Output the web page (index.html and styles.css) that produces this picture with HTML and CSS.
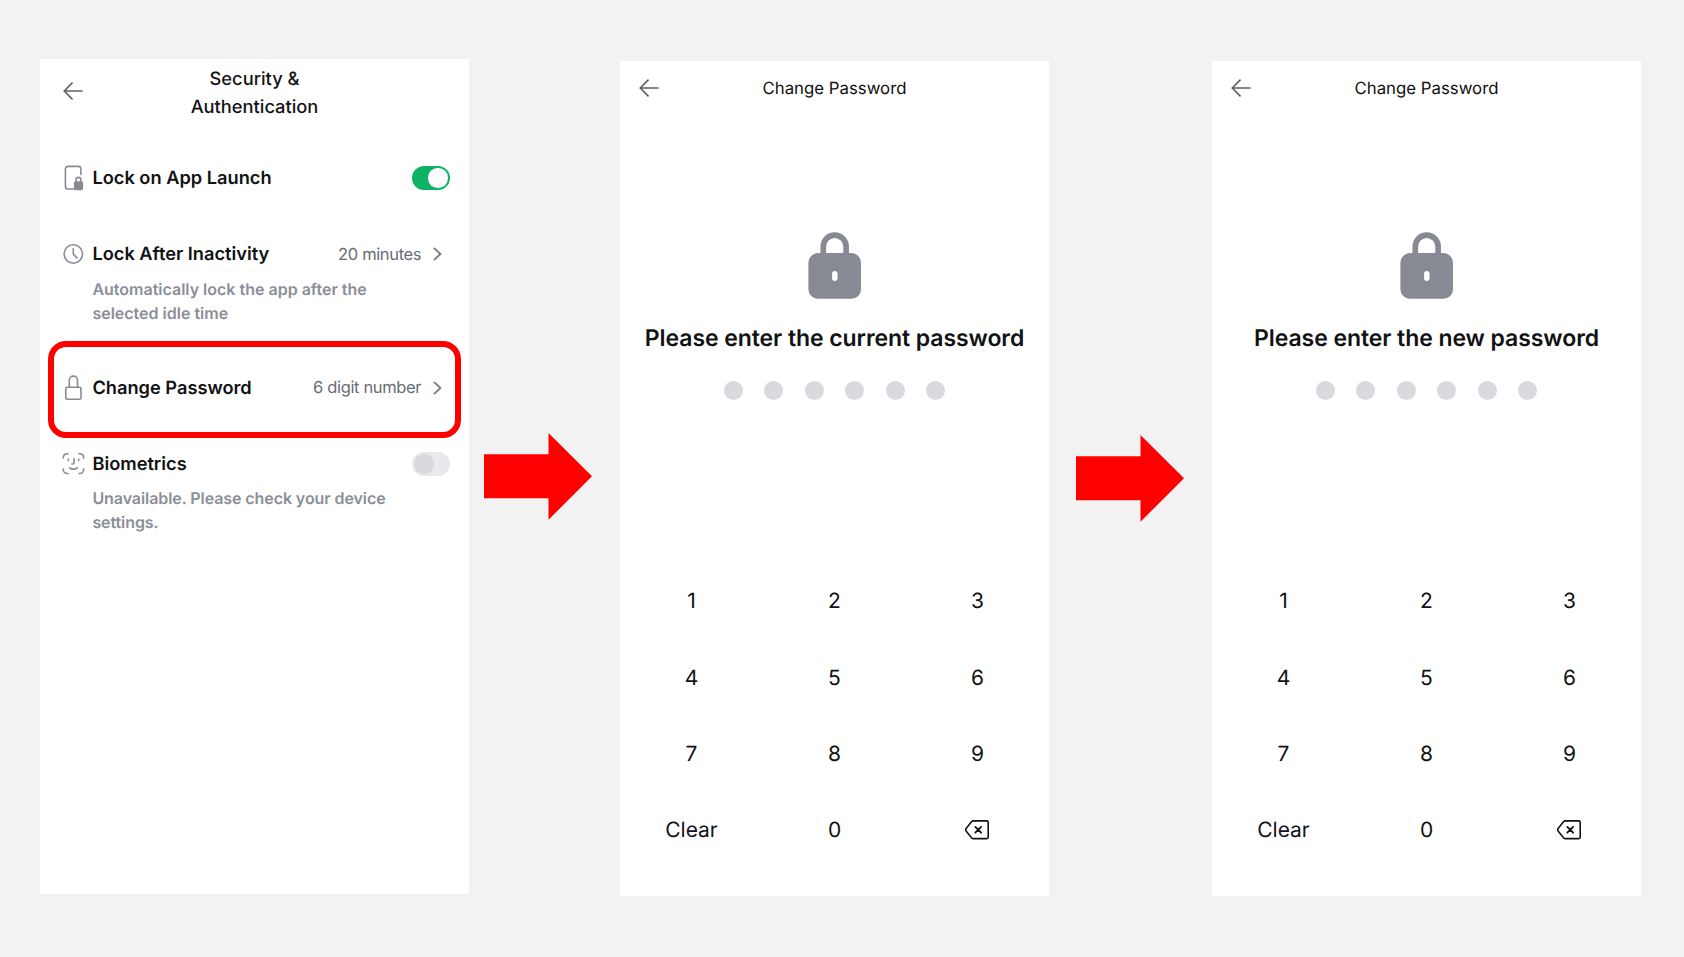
FILE: index.html
```html
<!DOCTYPE html>
<html lang="en">
<head>
<meta charset="utf-8">
<title>Change Password</title>
<link rel="stylesheet" href="styles.css">
</head>
<body>
<svg class="defs" aria-hidden="true">
  <symbol id="back" viewBox="0 0 20 18"><path d="M19 9H1.2M9 1.2 1.2 9 9 16.8"/></symbol>
  <symbol id="chevron" viewBox="0 0 9 14"><path d="M1.4 1.4 7.4 7l-6 5.600"/></symbol>
  <symbol id="arrow" viewBox="0 0 108 87"><path d="M0 21.300H64.500V0L108 43.300 64.500 86.700V65.200H0Z"/></symbol>
  <symbol id="padlock" viewBox="0 0 54 68"><path d="M15.300 23V14.500a11.200 11.200 0 0 1 22.800 0V23" fill="none" stroke="currentColor" stroke-width="5.700"/><rect x=".4" y="21.100" width="52.600" height="45.600" rx="9.500"/><rect x="24.100" y="39" width="5.400" height="10" rx="2.700" fill="#fff"/></symbol>
  <symbol id="erase" viewBox="0 0 26 22"><path d="M9.200 1.900H22.900a1.300 1.300 0 0 1 1.300 1.300V18.300a1.300 1.300 0 0 1-1.300 1.300H9.200a2 2 0 0 1-1.500-.7L2.300 12.200a2.200 2.200 0 0 1 0-2.900L7.700 2.600a2 2 0 0 1 1.500-.7Z" stroke-width="1.600"/><path d="m11.300 7.900 5.800 5.800m0-5.800-5.800 5.800" stroke-width="1.800"/></symbol>
</svg>
<main class="board">
  <section class="phone phone-settings">
    <header class="head head-tall">
      <svg class="back"><use href="#back"/></svg>
      <h1 class="title title-wide">Security &amp;<br>Authentication</h1>
    </header>
    <ul class="settings">
      <li class="item">
        <div class="line">
          <svg class="icon" viewBox="-1 0 26 28"><path d="M14.500 25H7a2.600 2.600 0 0 1-2.600-2.600V5A2.600 2.600 0 0 1 7 2.400H17.300A2.600 2.600 0 0 1 19.900 5V10.500"/><path d="M15 18.500V15.800a2.450 2.450 0 0 1 4.900 0V18.500"/><rect x="12.900" y="17.300" width="9.200" height="8.900" rx="2" fill="currentColor" stroke="none"/></svg>
          <span class="label">Lock on App Launch</span>
          <span class="switch switch-on"></span>
        </div>
      </li>
      <li class="item">
        <div class="line">
          <svg class="icon" viewBox="0 0 26 28"><circle cx="13.300" cy="14" r="9.200"/><path d="M13.300 8.700V13.300a2 2 0 0 0 .6 1.400L17 17.900"/></svg>
          <span class="label">Lock After Inactivity</span>
          <span class="value">20 minutes</span>
          <svg class="chevron"><use href="#chevron"/></svg>
        </div>
        <p class="note">Automatically lock the app after the<br>selected idle time</p>
      </li>
      <li class="item picked">
        <div class="line">
          <svg class="icon" viewBox="0 0 26 28"><rect x="5.800" y="13.300" width="15.200" height="11.900" rx="1.400"/><path d="M9.300 13.200V6.200a4.100 4.100 0 0 1 8.200 0V13.200"/></svg>
          <span class="label">Change Password</span>
          <span class="value">6 digit number</span>
          <svg class="chevron"><use href="#chevron"/></svg>
        </div>
      </li>
      <li class="item">
        <div class="line">
          <svg class="icon" viewBox="0 0 26 28"><path d="M3.300 8V7.500A4 4 0 0 1 7.300 3.800H8M19 3.800h.7a4 4 0 0 1 4 3.700V8M23.700 19v.5a4 4 0 0 1-4 4H19M8 23.500H7.300a4 4 0 0 1-4-4V19M8.300 9v1.600M18.700 9v1.600M14 8.700V12.800a1.200 1.200 0 0 1-1.200 1.200H12M9.700 17.800c2 1.800 5.500 1.800 7.500 0"/></svg>
          <span class="label">Biometrics</span>
          <span class="switch"></span>
        </div>
        <p class="note note-tight">Unavailable. Please check your device<br>settings.</p>
      </li>
    </ul>
  </section>

  <svg class="step step-first"><use href="#arrow"/></svg>

  <section class="phone">
    <header class="head">
      <svg class="back"><use href="#back"/></svg>
      <h1 class="title">Change Password</h1>
    </header>
    <div class="prompt">
      <svg class="padlock"><use href="#padlock"/></svg>
      <h2 class="ask">Please enter the current password</h2>
      <div class="dots"><i></i><i></i><i></i><i></i><i></i><i></i></div>
    </div>
    <div class="keys">
      <span>1</span><span>2</span><span>3</span>
      <span>4</span><span>5</span><span>6</span>
      <span>7</span><span>8</span><span>9</span>
      <span>Clear</span><span>0</span><span><svg class="erase"><use href="#erase"/></svg></span>
    </div>
  </section>

  <svg class="step step-second"><use href="#arrow"/></svg>

  <section class="phone">
    <header class="head">
      <svg class="back"><use href="#back"/></svg>
      <h1 class="title">Change Password</h1>
    </header>
    <div class="prompt">
      <svg class="padlock"><use href="#padlock"/></svg>
      <h2 class="ask">Please enter the new password</h2>
      <div class="dots"><i></i><i></i><i></i><i></i><i></i><i></i></div>
    </div>
    <div class="keys">
      <span>1</span><span>2</span><span>3</span>
      <span>4</span><span>5</span><span>6</span>
      <span>7</span><span>8</span><span>9</span>
      <span>Clear</span><span>0</span><span><svg class="erase"><use href="#erase"/></svg></span>
    </div>
  </section>
</main>
</body>
</html>
```
FILE: styles.css
```css
*, *::before, *::after { box-sizing: border-box; }

body {
  margin: 0;
  background: #f2f2f2;
  color: #111214;
  font-family: Inter, "Liberation Sans", sans-serif;
  text-rendering: geometricPrecision;
}

h1, h2, p, ul { margin: 0; padding: 0; font-weight: 400; }

.defs { position: absolute; width: 0; height: 0; }

.board {
  display: flex;
  align-items: flex-start;
  height: 957px;
  padding: 61px 0 0 40px;
}

.phone {
  flex: none;
  width: 429px;
  height: 835px;
  background: #fff;
}

.phone-settings { margin-top: -2px; }

.head {
  display: grid;
  grid-template-columns: 60px 1fr 60px;
  align-items: center;
  height: 55px;
}

.head-tall { height: 67px; }

.back {
  width: 20px;
  height: 18px;
  margin: -.500px 0 0 18.500px;
  fill: none;
  stroke: #5f626b;
  stroke-width: 1.700;
  stroke-linecap: round;
  stroke-linejoin: round;
}

.head-tall .back { margin: -3px 0 0 23.400px; }

.title {
  padding-top: 1px;
  font-size: 16.800px;
  font-weight: 430;
  line-height: 28.600px;
  text-align: center;
}

.title-wide { padding-top: 1.600px; font-size: 18.300px; font-weight: 450; }

.settings { list-style: none; padding-top: 14px; }

.item { padding: 24px 19px 24.200px 20px; }

.line { display: flex; align-items: center; height: 28px; }

.icon {
  flex: none;
  width: 26px;
  height: 28px;
  margin-right: 6.400px;
  color: #878a93;
  fill: none;
  stroke: currentColor;
  stroke-width: 1.600;
  stroke-linecap: round;
  stroke-linejoin: round;
}

.label { flex: 1; font-size: 18.230px; font-weight: 600; white-space: nowrap; }

.value { padding-bottom: 1px; color: #6a6d76; font-size: 16.500px; letter-spacing: -.35px; }

.chevron {
  width: 9px;
  height: 14px;
  margin: 0 8px 0 11.800px;
  fill: none;
  stroke: #7b7e87;
  stroke-width: 1.900;
  stroke-linecap: round;
  stroke-linejoin: round;
}

.note {
  margin: 9.800px 0 0 32.400px;
  color: #8b8e97;
  font-size: 16px;
  font-weight: 600;
  line-height: 23.800px;
  white-space: nowrap;
}

.note-tight { margin-top: 9px; letter-spacing: -.08px; }

.switch {
  display: flex;
  width: 38px;
  height: 24px;
  padding: 2.200px;
  border-radius: 12px;
  background: #e8e9ed;
}

.switch::before {
  content: "";
  width: 19.400px;
  height: 19.400px;
  border-radius: 50%;
  background: #d9dadf;
}

.switch-on { justify-content: flex-end; background: #0fb264; }
.switch-on::before { background: #fff; }

.picked { position: relative; }

/* Red frame that marks the row to tap */
.picked::after {
  content: "";
  position: absolute;
  left: 8px;
  top: -9px;
  width: 413px;
  height: 97px;
  border: 6px solid #f00;
  border-radius: 18px;
}

.step { flex: none; width: 108px; height: 87px; fill: #f00; }
.step-first { margin: 372px 28px 0 15px; }
.step-second { margin: 374px 28px 0 27px; }

.prompt { display: flex; flex-direction: column; align-items: center; padding-top: 116px; }

.padlock { width: 54px; height: 68px; color: #878a93; fill: currentColor; }

.ask {
  margin-top: 20px;
  font-size: 23px;
  font-weight: 600;
  letter-spacing: -.07px;
  line-height: 36px;
  white-space: nowrap;
}

.dots { display: flex; gap: 21.300px; margin-top: 24.800px; }
.dots i { width: 19.200px; height: 19.200px; border-radius: 50%; background: #d9dadf; }

.keys {
  display: grid;
  grid-template: repeat(4, 76.200px) / repeat(3, 1fr);
  place-items: center;
  margin-top: 163.800px;
  font-size: 21px;
  font-weight: 430;
}

.erase {
  display: block;
  width: 26px;
  height: 22px;
  margin: 0 .400px 1px 0;
  fill: none;
  stroke: #111214;
  stroke-linecap: round;
  stroke-linejoin: round;
}
```
